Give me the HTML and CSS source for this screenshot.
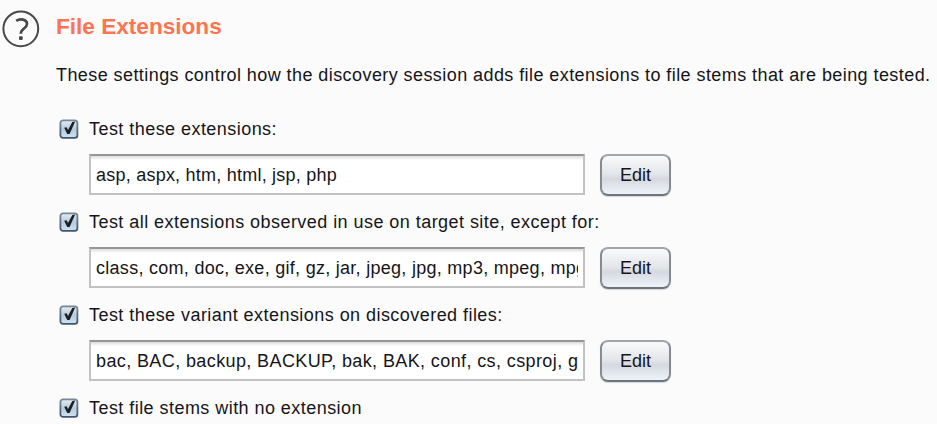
FILE: index.html
```
<!DOCTYPE html>
<html lang="en">
<head>
<meta charset="utf-8">
<title>File Extensions</title>
<link rel="stylesheet" href="styles.css">
</head>
<body>
<svg class="defs" width="0" height="0" aria-hidden="true">
  <defs>
    <linearGradient id="box" x1="0" y1="0" x2="0" y2="1">
      <stop offset="0" stop-color="#e4edf5"/>
      <stop offset=".5" stop-color="#b8cbdc"/>
      <stop offset="1" stop-color="#cfe2f2"/>
    </linearGradient>
    <linearGradient id="edge" x1="0" y1="0" x2="0" y2="1">
      <stop offset="0" stop-color="#77889a"/>
      <stop offset="1" stop-color="#3f566e"/>
    </linearGradient>
    <symbol id="check" viewBox="0 0 20 20">
      <rect x="1.4" y="1.4" width="17" height="17.4" rx="2.6" fill="url(#box)" stroke="url(#edge)" stroke-width="1.8"/>
      <path d="M5.2 8.8 7.6 8.2 9 11 13.3 3 16.2 2.4 10.6 14.9 8.2 14.9Z" fill="#1c2025"/>
    </symbol>
  </defs>
</svg>
<section class="panel">
  <svg class="help" viewBox="0 0 38 38" aria-label="Help">
    <circle cx="18.8" cy="18.8" r="17.4"/>
    <path d="M14.2 10.9C17.6 8.5 25 8.8 25 14C25 18.6 18.8 18.6 18.8 23.8"/>
    <rect x="17" y="26.3" width="3.7" height="3.8" rx="1"/>
  </svg>
  <div class="content">
    <h1 class="title">File Extensions</h1>
    <p class="intro">These settings control how the discovery session adds file extensions to file stems that are being tested.</p>
    <div class="option">
      <div class="label"><svg class="check"><use href="#check"/></svg><span>Test these extensions:</span></div>
      <div class="row"><div class="field"><span class="short">asp, aspx, htm, html, jsp, php</span></div><button class="edit">Edit</button></div>
    </div>
    <div class="option">
      <div class="label"><svg class="check"><use href="#check"/></svg><span>Test all extensions observed in use on target site, except for:</span></div>
      <div class="row"><div class="field"><span class="long">class, com, doc, exe, gif, gz, jar, jpeg, jpg, mp3, mpeg, mpg</span></div><button class="edit">Edit</button></div>
    </div>
    <div class="option">
      <div class="label"><svg class="check"><use href="#check"/></svg><span>Test these variant extensions on discovered files:</span></div>
      <div class="row"><div class="field"><span>bac, BAC, backup, BACKUP, bak, BAK, conf, cs, csproj, g</span></div><button class="edit">Edit</button></div>
    </div>
    <div class="option last">
      <div class="label"><svg class="check"><use href="#check"/></svg><span>Test file stems with no extension</span></div>
    </div>
  </div>
</section>
</body>
</html>
```
FILE: styles.css
```
* { box-sizing: border-box; }
body {
  margin: 0;
  height: 424px;
  overflow: hidden;
  background: #fbfbfb;
  color: #151519;
  font: 18px/24px "Liberation Sans", Arial, sans-serif;
}
.defs { display: block; }
.panel { display: flex; padding: 10px 0 0 2px; white-space: nowrap; }
.help { width: 38px; height: 38px; flex: none; margin-right: 16px; fill: none; stroke: #484848; stroke-width: 2; }
.help path { stroke-width: 2.7; }
.help rect { fill: #484848; stroke: none; }
.content { flex: none; }
.title { margin: 3px 0 0; font-size: 22.6px; line-height: 28px; color: #ff7350; }
.intro { margin: 22px 0 30px; letter-spacing: .425px; }
.option { height: 93px; padding-left: 3px; }
.last { height: 24px; }
.label { display: flex; align-items: center; height: 24px; gap: 10px; letter-spacing: .45px; }
.check { width: 20px; height: 20px; flex: none; }
.row { display: flex; gap: 15px; margin: 13px 0 0 30px; }
.field {
  width: 496px;
  height: 41px;
  padding: 0 5px;
  border: 2px solid #c2c2c2;
  border-top-color: #969696;
  background: linear-gradient(#dcdcdc, #fff 4px);
  line-height: 38px;
}
.field span { display: block; overflow: hidden; letter-spacing: .39px; }
.field .short { letter-spacing: .23px; }
.field .long { letter-spacing: .28px; }
.edit {
  width: 71px;
  height: 42px;
  padding: 0 0 1px;
  border: 2px solid #8c9198;
  border-color: #a2a5a9 #868b92 #6d747d;
  border-radius: 8px;
  background: linear-gradient(#fafafb, #e3e5e9 48%, #d5d8df 60%, #eef3fa);
  box-shadow: 0 1px 1px #d4d6da;
  color: inherit;
  font: inherit;
}
```
